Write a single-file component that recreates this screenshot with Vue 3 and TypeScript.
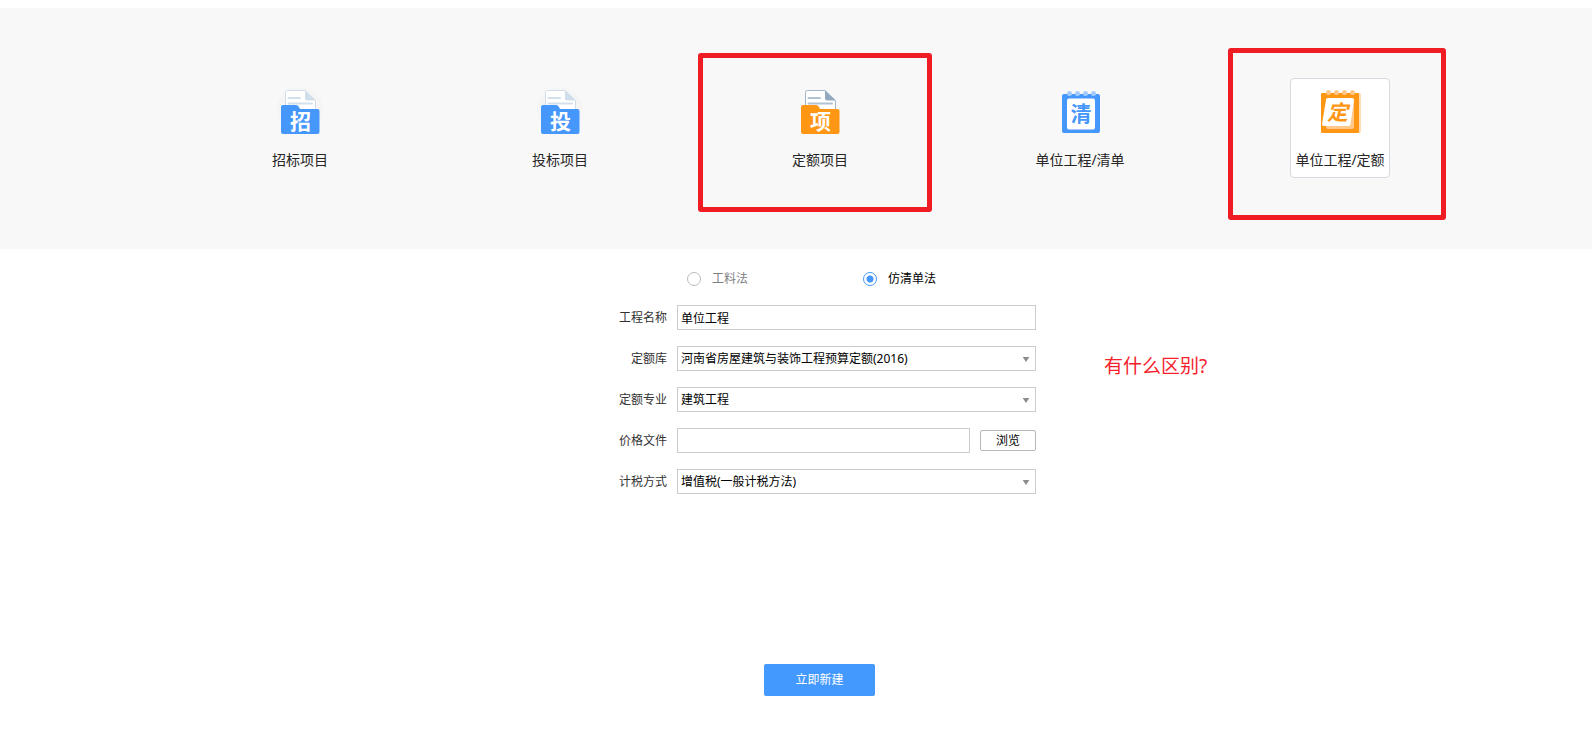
<script setup lang="ts">
import { ref } from 'vue'

interface ProjectType {
  id: string
  label: string
  glyph: string
  shape: 'folder' | 'notebook' | 'sheet'
  tone: 'blue' | 'orange'
  mark?: 'wide' | 'tall'
}

const types: ProjectType[] = [
  { id: 'tender', label: '招标项目', glyph: '招', shape: 'folder', tone: 'blue' },
  { id: 'bid', label: '投标项目', glyph: '投', shape: 'folder', tone: 'blue' },
  { id: 'quota', label: '定额项目', glyph: '项', shape: 'folder', tone: 'orange', mark: 'wide' },
  { id: 'unit-list', label: '单位工程/清单', glyph: '清', shape: 'notebook', tone: 'blue' },
  { id: 'unit-quota', label: '单位工程/定额', glyph: '定', shape: 'sheet', tone: 'orange', mark: 'tall' },
]

const selected = ref('unit-quota')
const method = ref('list')
const projectName = ref('单位工程')
const library = ref('河南省房屋建筑与装饰工程预算定额(2016)')
const specialty = ref('建筑工程')
const priceFile = ref('')
const taxMode = ref('增值税(一般计税方法)')
</script>

<template>
  <main class="page">
    <nav class="band">
      <div class="types">
        <div v-for="t in types" :key="t.id" class="slot">
          <button
            type="button"
            class="type"
            :class="{ active: selected === t.id }"
            :aria-pressed="selected === t.id"
            @click="selected = t.id"
          >
            <svg class="icon" :class="t.tone" viewBox="0 0 48 48" aria-hidden="true">
              <template v-if="t.shape === 'folder'">
                <circle v-if="t.tone === 'blue'" cx="24" cy="22" r="23" fill="#f5f5f5" />
                <path class="paper" d="M9.5 24V4.500q0-2 2-2H29L39.500 12.500V24z" />
                <path class="fold" d="M29 2.500L39.500 12.500H31q-2 0-2-2z" />
                <path class="rule" d="M12.500 10H24M12.500 15.500H36" />
                <path class="main" d="M5 19q0-2 2-2H20q2 0 3 2l1 2H41.500q2 0 2 2V44q0 2-2 2H7q-2 0-2-2z" />
                <text class="glyph light" x="24.500" y="41">{{ t.glyph }}</text>
              </template>
              <template v-else-if="t.shape === 'notebook'">
                <rect class="main" x="6" y="6" width="38" height="39" rx="2" />
                <rect x="11" y="10.500" width="28" height="31" rx="2" fill="#fff" />
                <circle v-for="x in [13.5, 21.5, 29.5, 37.5]" :key="x" class="ring" :cx="x" cy="5.500" r="2.500" />
                <text class="glyph" x="25" y="33">{{ t.glyph }}</text>
              </template>
              <template v-else>
                <rect x="8" y="5" width="37" height="40" rx="2" fill="#ffdcb2" />
                <rect class="main" x="5" y="5" width="38" height="40" rx="1" />
                <rect x="10" y="10" width="28" height="31" rx="2" fill="#ffc98a" />
                <path d="M12 10H36q2 0 2 2L34.500 36q0 2-2 2H8q-2 0-2-2L10 12q0-2 2-2z" fill="#fff" />
                <circle v-for="x in [12.5, 20.5, 28.5, 36.5]" :key="x" class="ring" :cx="x" cy="4.500" r="2.500" />
                <text class="glyph slanted" x="21.500" y="32">{{ t.glyph }}</text>
              </template>
            </svg>
            <span class="type-label">{{ t.label }}</span>
          </button>
          <span v-if="t.mark" class="mark" :class="t.mark"></span>
        </div>
      </div>
    </nav>

    <form class="form" @submit.prevent>
      <div class="methods" role="radiogroup" aria-label="计价方法">
        <label class="method">
          <input v-model="method" type="radio" name="method" value="material" />
          <span>工料法</span>
        </label>
        <label class="method">
          <input v-model="method" type="radio" name="method" value="list" />
          <span>仿清单法</span>
        </label>
      </div>

      <div class="row">
        <label for="name">工程名称</label>
        <input id="name" v-model="projectName" class="box" type="text" />
      </div>
      <div class="row">
        <label for="library">定额库</label>
        <div class="drop">
          <select id="library" v-model="library" class="box">
            <option>河南省房屋建筑与装饰工程预算定额(2016)</option>
          </select>
          <svg class="arrow" viewBox="0 0 8 6" aria-hidden="true"><path d="M0 0H8L4 6z" /></svg>
        </div>
        <p class="note">有什么区别?</p>
      </div>
      <div class="row">
        <label for="specialty">定额专业</label>
        <div class="drop">
          <select id="specialty" v-model="specialty" class="box">
            <option>建筑工程</option>
          </select>
          <svg class="arrow" viewBox="0 0 8 6" aria-hidden="true"><path d="M0 0H8L4 6z" /></svg>
        </div>
      </div>
      <div class="row">
        <label for="price">价格文件</label>
        <div class="file">
          <input id="price" v-model="priceFile" class="box" type="text" />
          <button type="button" class="browse">浏览</button>
        </div>
      </div>
      <div class="row">
        <label for="tax">计税方式</label>
        <div class="drop">
          <select id="tax" v-model="taxMode" class="box">
            <option>增值税(一般计税方法)</option>
          </select>
          <svg class="arrow" viewBox="0 0 8 6" aria-hidden="true"><path d="M0 0H8L4 6z" /></svg>
        </div>
      </div>

      <button type="submit" class="create">立即新建</button>
    </form>
  </main>
</template>

<style>
body {
  background: #fff;
}
</style>

<style scoped>
.page,
.page button,
.page input,
.page select {
  font-family: 'Noto Sans', 'Noto Sans CJK SC', sans-serif;
  font-size: 12px;
  line-height: 20px;
}

.page,
.page * {
  box-sizing: border-box;
}

.page {
  padding-top: 8px;
  color: #333;
}

.band {
  padding: 70px 0 71px 48px;
  background: #f8f8f8;
}

.types {
  display: flex;
  justify-content: space-between;
  max-width: 1140px;
  margin: 0 auto;
}

.slot {
  position: relative;
}

.page .type {
  display: flex;
  flex-direction: column;
  align-items: center;
  gap: 14px;
  width: 100px;
  height: 100px;
  padding: 9px 0 0;
  border: 1px solid transparent;
  border-radius: 4px;
  background: transparent;
  color: #262626;
  font-size: 14px;
  white-space: nowrap;
  cursor: pointer;
}

.page .type.active {
  border-color: #d5dbe0;
  background: #fff;
}

.icon {
  flex: none;
  width: 48px;
  height: 48px;
}

.blue {
  --main: #4697fc;
  --ring: #a3ccfd;
  --edge: #cfdeea;
  --fold: #cfdeea;
  --rule: #d3e0eb;
}

.orange {
  --main: #ff9614;
  --ring: #ffc88a;
  --edge: #9fb6cc;
  --fold: #93a9bf;
  --rule: #b2c2d1;
}

.main {
  fill: var(--main);
}

.ring {
  fill: var(--ring);
}

.paper {
  fill: #fff;
  stroke: var(--edge);
}

.fold {
  fill: var(--fold);
}

.rule {
  fill: none;
  stroke: var(--rule);
  stroke-width: 2;
  stroke-linecap: round;
}

.glyph {
  fill: var(--main);
  font-family: 'Noto Sans CJK SC', sans-serif;
  font-size: 21px;
  font-weight: 700;
  text-anchor: middle;
}

.light {
  fill: #fff;
}

.slanted {
  font-style: italic;
}

.mark {
  position: absolute;
  border: 5px solid #ef1c24;
  border-radius: 3px;
  pointer-events: none;
}

.mark.wide {
  top: -25px;
  left: -72px;
  width: 234px;
  height: 159px;
}

.mark.tall {
  top: -30px;
  left: -62px;
  width: 218px;
  height: 172px;
}

.form {
  display: flex;
  flex-direction: column;
  gap: 16px;
  width: 482px;
  margin: 0 auto;
  padding: 20px 1px 48px 48px;
}

.methods {
  display: flex;
  gap: 115px;
  padding-left: 84px;
}

.method {
  display: flex;
  align-items: center;
  gap: 11px;
  color: #808080;
}

.method:has(:checked) {
  color: #000;
}

.method input {
  width: 14px;
  height: 14px;
  margin: 0;
  border: 1px solid #bbb;
  border-radius: 50%;
  background: #fff;
  appearance: none;
}

.method input:checked {
  border-color: #4697fc;
  background: radial-gradient(circle, #4697fc 3px, #fff 4px);
}

.row {
  position: relative;
  display: grid;
  grid-template-columns: 64px 1fr;
  align-items: center;
  column-gap: 10px;
}

.row > label {
  text-align: right;
}

.box {
  display: block;
  width: 100%;
  min-width: 0;
  height: 25px;
  margin: 0;
  padding: 0 3px;
  border: 1px solid #ccc;
  border-radius: 0;
  background: #fff;
  color: #000;
  appearance: none;
}

.drop {
  position: relative;
}

.arrow {
  position: absolute;
  top: 11px;
  right: 6px;
  width: 8px;
  height: 5px;
  fill: #8c8c8c;
  pointer-events: none;
}

.file {
  display: flex;
  align-items: center;
  gap: 10px;
}

.browse {
  flex: none;
  width: 56px;
  height: 21px;
  padding: 0;
  border: 1px solid #b8b8b8;
  border-radius: 2px;
  background: #fff;
  color: #000;
}

.page .browse {
  line-height: 18px;
}

.note {
  position: absolute;
  top: 8px;
  left: calc(100% + 68px);
  margin: 0;
  color: #f5222d;
  font-size: 19px;
  line-height: 24px;
  white-space: nowrap;
}

.create {
  align-self: center;
  width: 111px;
  height: 32px;
  margin-top: 154px;
  padding: 0;
  border: 0;
  border-radius: 2px;
  background: #4499ff;
  color: #fff;
  cursor: pointer;
}
</style>
